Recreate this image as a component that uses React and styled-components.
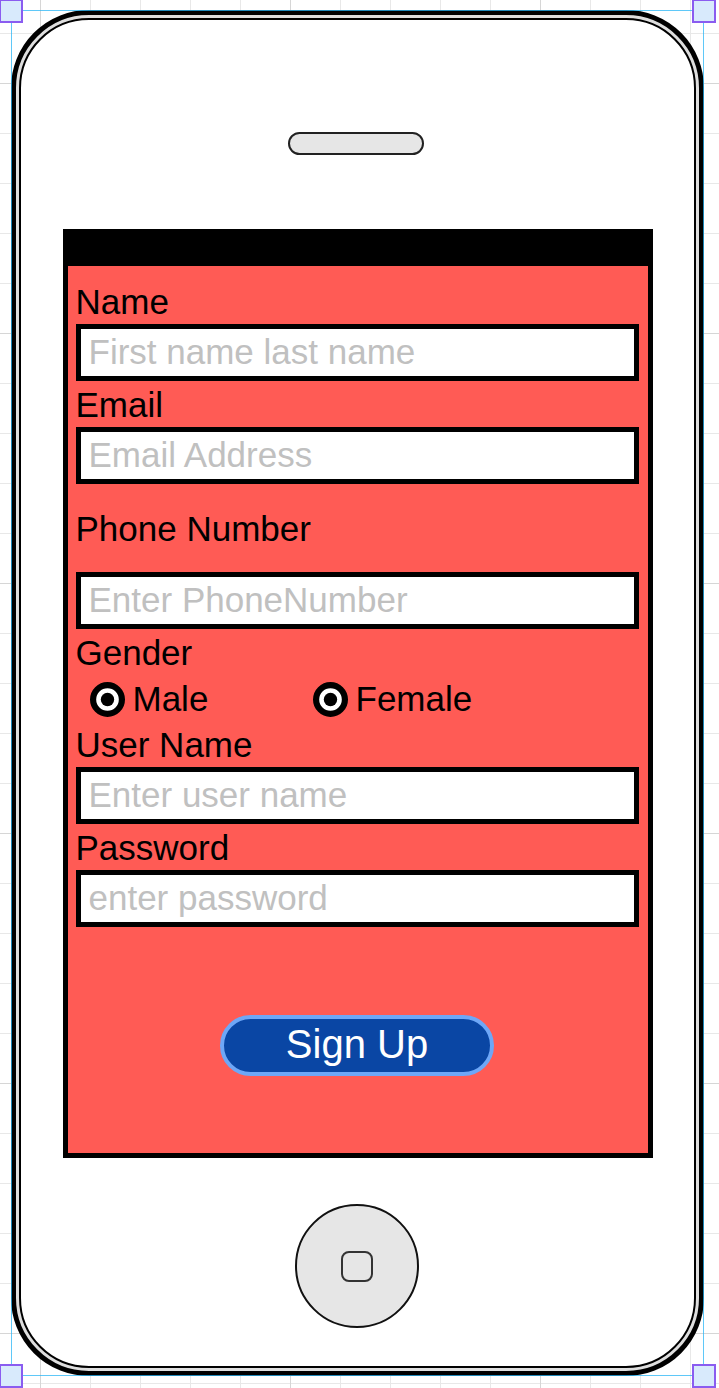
import styled, { createGlobalStyle } from "styled-components";

const GlobalStyle = createGlobalStyle`
    html, body {
        margin: 0;
        padding: 0;
        background: #fff;
    }
    body {
        font-family: "Liberation Sans", Arial, sans-serif;
    }
`;

const Canvas = styled.div`
    position: relative;
    width: 719px;
    height: 1388px;
    box-sizing: border-box;
    padding: 10px 0 0 11px;
    overflow: hidden;
    background-color: #fff;
    background-image:
        linear-gradient(#d6d6d6 1px, transparent 1px),
        linear-gradient(90deg, #d6d6d6 1px, transparent 1px),
        linear-gradient(#e8e8e8 1px, transparent 1px),
        linear-gradient(90deg, #e8e8e8 1px, transparent 1px);
    background-size: 250px 250px, 250px 250px, 50px 50px, 50px 50px;
    background-position: 0 83px, 40px 0, 0 33px, 40px 0;
`;

const Phone = styled.div`
    width: 693px;
    height: 1366px;
    box-sizing: border-box;
    border: 5px solid #000;
    border-radius: 78px;
    padding: 3px;
    background: #dedede;
`;

const PhoneFace = styled.div`
    height: 100%;
    box-sizing: border-box;
    border: 2px solid #000;
    border-radius: 70px;
    background: #fff;
    display: flex;
    flex-direction: column;
    align-items: center;
`;

const Speaker = styled.div`
    width: 136px;
    height: 23px;
    margin: 112px 3px 0 0;
    box-sizing: border-box;
    border: 2px solid #222;
    border-radius: 12px;
    background: #e6e6e6;
`;

const Screen = styled.div`
    width: 590px;
    height: 929px;
    margin-top: 74px;
    box-sizing: border-box;
    border: 5px solid #000;
    border-top-width: 37px;
    background: #ff5b55;
`;

const Form = styled.div`
    display: flex;
    flex-direction: column;
    padding: 16px 9px 0 8px;
`;

const Label = styled.div`
    height: ${(p) => (p.$tall ? "82px" : "40px")};
    display: flex;
    align-items: center;
    font-size: 35px;
    color: #000;
    line-height: 40px;
`;

const Field = styled.input`
    display: block;
    width: 563px;
    height: 57px;
    margin: 2px 0 4px;
    box-sizing: border-box;
    border: 5px solid #000;
    border-radius: 0;
    padding: 0 0 2px 8px;
    background: #fff;
    font-family: "Liberation Sans", Arial, sans-serif;
    font-size: 35px;
    color: #000;
    outline: none;

    &::placeholder {
        color: #c0c0c0;
    }
`;

const RadioRow = styled.div`
    height: 52px;
    display: flex;
    align-items: center;
    padding-left: 14px;
`;

const RadioOption = styled.label`
    width: ${(p) => p.$w || "auto"};
    display: flex;
    align-items: center;
    gap: 8px;
    font-size: 35px;
    color: #000;
`;

const SignUpButton = styled.button`
    align-self: center;
    width: 274px;
    height: 61px;
    margin-top: 84px;
    box-sizing: border-box;
    border: 4px solid #6ea7f7;
    border-radius: 31px;
    background: #0a46a4;
    color: #fff;
    font-family: "Liberation Sans", Arial, sans-serif;
    font-size: 40px;
    line-height: 1;
    padding: 0 0 4px;
    cursor: pointer;
`;

const HomeButton = styled.div`
    width: 124px;
    height: 124px;
    margin: 46px 2px 0 0;
    box-sizing: border-box;
    border: 2px solid #111;
    border-radius: 50%;
    background: #e6e6e6;
    display: flex;
    align-items: center;
    justify-content: center;
`;

const HomeKey = styled.div`
    width: 32px;
    height: 31px;
    box-sizing: border-box;
    border: 2.5px solid #333;
    border-radius: 8px;
`;

const Selection = styled.div`
    position: absolute;
    left: 11px;
    top: 10px;
    width: 693px;
    height: 1366px;
    box-sizing: border-box;
    border: 1.5px solid rgba(41, 182, 246, 0.75);
    pointer-events: none;
`;

const Handle = styled.div`
    position: absolute;
    width: 20px;
    height: 20px;
    border: 2px solid #8a5cf0;
    background: #d8eafc;
    left: ${(p) => p.$x - 12}px;
    top: ${(p) => p.$y - 12}px;
`;

const Radio = () => (
    <svg width="35" height="35" viewBox="0 0 34 34">
        <circle cx="17" cy="17" r="14" fill="#fff" stroke="#000" strokeWidth="6" />
        <circle cx="17" cy="17" r="6.5" fill="#000" />
    </svg>
);

const App = () => {
    return (
        <>
            <GlobalStyle />
            <Canvas>
                <Phone>
                    <PhoneFace>
                        <Speaker />
                        <Screen>
                            <Form>
                                <Label>Name</Label>
                                <Field placeholder="First name last name" />
                                <Label>Email</Label>
                                <Field placeholder="Email Address" />
                                <Label $tall>Phone Number</Label>
                                <Field placeholder="Enter PhoneNumber" />
                                <Label>Gender</Label>
                                <RadioRow>
                                    <RadioOption $w="223px"><Radio />Male</RadioOption>
                                    <RadioOption><Radio />Female</RadioOption>
                                </RadioRow>
                                <Label>User Name</Label>
                                <Field placeholder="Enter user name" />
                                <Label>Password</Label>
                                <Field placeholder="enter password" />
                                <SignUpButton>Sign Up</SignUpButton>
                            </Form>
                        </Screen>
                        <HomeButton>
                            <HomeKey />
                        </HomeButton>
                    </PhoneFace>
                </Phone>
                <Selection />
                <Handle $x={11} $y={11} />
                <Handle $x={704} $y={11} />
                <Handle $x={11} $y={1376} />
                <Handle $x={704} $y={1376} />
            </Canvas>
        </>
    );
};

export default App;
